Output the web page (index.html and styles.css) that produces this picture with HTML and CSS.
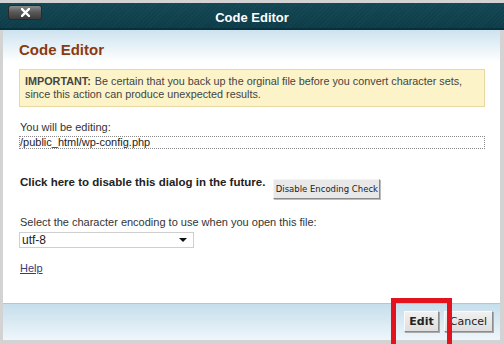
FILE: index.html
```html
<!DOCTYPE html>
<html>
<head>
<meta charset="utf-8">
<link rel="stylesheet" href="styles.css">
</head>
<body>
<div class="header">
  <button class="close" aria-label="Close">
    <svg width="9" height="9" viewBox="0 0 9 9"><path d="M1 1L8 8M8 1L1 8" stroke="#fff" stroke-width="2.4" stroke-linecap="square"/></svg>
  </button>
  <div class="title">Code Editor</div>
</div>
<div class="frame">
  <div class="content">
    <h1 class="heading">Code Editor</h1>
    <div class="notice"><b class="imp">IMPORTANT:</b>Be certain that you back up the orginal file before you convert character sets, since this action can produce unexpected results.</div>
    <div class="label editing">You will be editing:</div>
    <div class="filebox">/public_html/wp-config.php</div>
    <div class="disable-row">
      <span class="disable-text">Click here to disable this dialog in the future.</span>
      <button class="btn-small">Disable Encoding Check</button>
    </div>
    <div class="label select-label">Select the character encoding to use when you open this file:</div>
    <div class="select"><span>utf-8</span><span class="arrow"></span></div>
    <a class="help" href="#">Help</a>
  </div>
  <div class="footer">
    <button class="fbtn edit">Edit</button>
    <button class="fbtn cancel">Cancel</button>
  </div>
</div>
<div class="highlight"></div>
</body>
</html>
```
FILE: styles.css
```css
html, body {
  margin: 0;
  padding: 0;
  overflow: hidden;
}
body {
  width: 504px;
  height: 344px;
  background: #d3d3d3;
  padding-top: 3px;
  box-sizing: border-box;
  position: relative;
  font-family: "Liberation Sans", Arial, sans-serif;
  color: #333;
}
.header {
  height: 25px;
  border-bottom: 2px solid #06303b;
  background:
    repeating-linear-gradient(135deg, rgba(255,255,255,0.025) 0 1px, rgba(0,0,0,0) 1px 3px),
    linear-gradient(#134754, #0d3c48);
  position: relative;
  display: flex;
  align-items: center;
  justify-content: center;
}
.close {
  position: absolute;
  left: 8px;
  top: 2px;
  width: 34px;
  height: 15px;
  border: 1px solid #2a2a2a;
  border-radius: 3px;
  background: linear-gradient(#8a8a8a, #5a5a5a 45%, #3b3b3b);
  padding: 0;
  display: flex;
  align-items: center;
  justify-content: center;
}
.title {
  color: #fff;
  font-weight: bold;
  font-size: 13px;
  padding-top: 4px;
}
.frame {
  margin: 0 4px 0 3px;
  height: 310px;
  display: flex;
  flex-direction: column;
}
.content {
  flex: 1;
  background: linear-gradient(#cde3ef 0, #ffffff 32px, #ffffff);
  padding: 11px 15px 0 16px;
  font-size: 11px;
}
.heading {
  margin: 0;
  font-size: 15px;
  line-height: 18px;
  color: #8a3a10;
  font-weight: bold;
}
.notice {
  margin-top: 10px;
  background: #fcf3c8;
  border: 1px solid #e8d9a2;
  padding: 5px 5px;
  line-height: 13px;
  font-size: 10.8px;
  color: #444;
}
.imp {
  margin-right: 4px;
}
.label {
  line-height: 13px;
  font-size: 11px;
  color: #333;
}
.editing {
  margin-top: 14px;
  padding-left: 1px;
}
.filebox {
  margin-top: 2px;
  border: 1px dotted #8a8a8a;
  height: 11px;
  line-height: 11px;
  font-size: 11px;
  color: #222;
}
.disable-row {
  margin-top: 26px;
  display: flex;
  align-items: flex-start;
  padding-left: 1px;
}
.disable-text {
  font-weight: bold;
  font-size: 11.5px;
  line-height: 14px;
  color: #222;
}
.btn-small {
  margin-left: 8px;
  margin-top: 4px;
  width: 107px;
  height: 20px;
  padding: 0;
  font-family: "DejaVu Sans", Verdana, sans-serif;
  font-size: 8.5px;
  color: #222;
  background: #e8e8e8;
  border: 1px solid;
  border-color: #f4f4f4 #8a8a8a #8a8a8a #f4f4f4;
  box-shadow: 1px 1px 0 #bcbcbc;
}
.select-label {
  margin-top: 17px;
  padding-left: 1px;
}
.select {
  margin-top: 3px;
  height: 14px;
  border: 1px solid #cfcfcf;
  display: flex;
  align-items: center;
  justify-content: space-between;
  padding: 0 6px 0 2px;
  box-sizing: content-box;
  width: 165px;
  font-size: 12px;
  color: #222;
}
.arrow {
  width: 0;
  height: 0;
  border-left: 4px solid transparent;
  border-right: 4px solid transparent;
  border-top: 4px solid #111;
}
.help {
  display: inline-block;
  margin-top: 14px;
  margin-left: 1px;
  line-height: 13px;
  font-size: 11px;
  color: #3a3a7a;
}
.footer {
  border-top: 1px solid #b9c4cc;
  background: linear-gradient(#c6deec, #eef6fb);
  display: flex;
  justify-content: flex-end;
  align-items: flex-start;
  padding: 7px 7px 0 0;
  box-sizing: border-box;
  height: 37px;
  gap: 5px;
}
.fbtn {
  height: 21px;
  padding: 0;
  font-family: "DejaVu Sans", Verdana, sans-serif;
  font-size: 11px;
  color: #222;
  background: linear-gradient(#f0f0f0, #dedede);
  border: 1px solid;
  border-color: #fafafa #8c8c8c #8c8c8c #fafafa;
  box-shadow: 1px 1px 0 #a9a9a9;
}
.edit {
  width: 35px;
  font-weight: bold;
}
.cancel {
  width: 49px;
}
.highlight {
  position: absolute;
  left: 391px;
  top: 298px;
  width: 51px;
  height: 41px;
  border: 5px solid #e3121c;
  border-bottom: 0;
}
```
